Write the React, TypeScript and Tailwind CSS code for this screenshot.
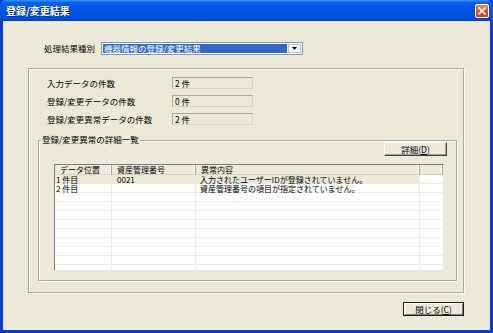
const rows = [
  { pos: '1 件目', no: '0021', msg: '入力されたユーザーIDが登録されていません。', sel: true },
  { pos: '2 件目', no: '', msg: '資産管理番号の項目が指定されていません。', sel: false },
  ...Array.from({ length: 9 }, () => ({ pos: '', no: '', msg: '', sel: false })),
];

const counts = [
  { label: '入力データの件数', value: '2 件' },
  { label: '登録/変更データの件数', value: '0 件' },
  { label: '登録/変更異常データの件数', value: '2 件' },
];

function TitleBar() {
  return (
    <div className="h-[21px] flex items-center rounded-t-[6px] bg-[linear-gradient(180deg,#3d95ff_0%,#0a5ff0_12%,#0054e3_50%,#0050e0_85%,#0041c4_100%)] pl-[6px] pr-[4px]">
      <span className="flex-1 text-white font-bold text-[10px] leading-none [text-shadow:1px_1px_0_#0a2a80]">
        登録/変更結果
      </span>
      <div className="w-[14px] h-[14px] rounded-[2px] border border-white bg-[linear-gradient(180deg,#e8865d_0%,#d9512a_60%,#c8401e_100%)] flex items-center justify-center">
        <svg width="8" height="8" viewBox="0 0 8 8">
          <path d="M1 1 L7 7 M7 1 L1 7" stroke="white" strokeWidth="1.6" strokeLinecap="square" />
        </svg>
      </div>
    </div>
  );
}

function Btn({ children, isDefault }: { children: React.ReactNode; isDefault?: boolean }) {
  return (
    <div
      className={`h-[14px] flex items-center justify-center bg-[#ece9d8] border ${
        isDefault
          ? 'border-[#1a1a1a] shadow-[inset_1px_1px_0_#fff,inset_-1px_-1px_0_#808080]'
          : 'border-t-white border-l-white border-r-[#404040] border-b-[#404040] shadow-[inset_-1px_-1px_0_#a0a0a0]'
      } text-[8.5px] leading-none`}
    >
      {children}
    </div>
  );
}

export default function App() {
  return (
    <div className="w-[493px] h-[333px] flex flex-col bg-[#0838d8] font-['Noto_Sans_CJK_JP',sans-serif] text-black">
      <TitleBar />
      <div className="flex-1 mx-[3px] mb-[3px] bg-[#ece9d8] flex flex-col pt-[21px] pl-[25px]">
        {/* 処理結果種別 */}
        <div className="flex items-center h-[13px]">
          <span className="ml-[16px] w-[57px] text-[8.5px] leading-none">処理結果種別</span>
          <div className="w-[202px] h-[13px] border border-[#7f9db9] bg-white flex items-stretch p-[1px]">
            <div className="flex-1 bg-[#316ac5] text-white text-[8.5px] leading-[9px] pl-[1px]">機器情報の登録/変更結果</div>
            <div className="w-[13px] ml-[1px] bg-[#f4f3ee] border border-[#c3c3c3] flex items-center justify-center">
              <svg width="5" height="3" viewBox="0 0 5 3">
                <path d="M0 0 H5 L2.5 3 Z" fill="#000" />
              </svg>
            </div>
          </div>
        </div>

        {/* 件数 frame */}
        <div className="mt-[13px] w-[436px] h-[225px] border border-[#aca899] shadow-[inset_1px_1px_0_#fff,1px_1px_0_#fff] pt-[8px] flex flex-col">
          <div className="flex flex-col gap-[6px]">
            {counts.map((c) => (
              <div key={c.label} className="flex items-center h-[12px]">
                <span className="ml-[18px] w-[125px] text-[8.5px] leading-none">{c.label}</span>
                <div className="w-[81px] h-[12px] border border-[#aca899] border-r-[#d8d5c6] border-b-[#d8d5c6] text-[8.5px] leading-[10px] pl-[2px]">
                  {c.value}
                </div>
              </div>
            ))}
          </div>

          {/* 詳細一覧 group */}
          <div className="relative mt-[15px] ml-[9px] w-[419px] h-[141px] border border-[#aca899] shadow-[inset_1px_1px_0_#fff,1px_1px_0_#fff] flex flex-col">
            <span className="absolute left-[2px] top-[-6px] bg-[#ece9d8] px-[1px] text-[8.5px] leading-none">
              登録/変更異常の詳細一覧
            </span>
            <div className="flex justify-end pr-[9px] pt-[1px]">
              <div className="w-[63px]">
                <Btn>
                  詳細(<span className="underline">D</span>)
                </Btn>
              </div>
            </div>
            <div className="mt-[8px] ml-[15px] w-[390px] h-[107px] border border-[#7a7a7a] border-r-[#e8e8e8] border-b-[#e8e8e8] bg-white overflow-hidden text-[8px] leading-[9px]">
              <div className="grid grid-cols-[57px_84px_224px_1fr] h-[10px] bg-[#ebeadb] border-b border-[#d6d2c2]">
                {['データ位置', '資産管理番号', '異常内容', ''].map((h, i) => (
                  <div key={i} className="border-r border-[#aca899] pl-[5px] leading-[10px] shadow-[inset_-1px_0_0_#fff]">
                    {h}
                  </div>
                ))}
              </div>
              {rows.map((r, i) => (
                <div key={i} className="grid grid-cols-[57px_84px_224px_1fr] h-[9px] border-b border-[#efedE3]">
                  <div className={`pl-[1px] border-r border-[#efede3] ${r.sel ? 'bg-[#ece9d8]' : ''}`}>{r.pos}</div>
                  <div className={`pl-[5px] border-r border-[#efede3] ${r.sel ? 'bg-[#ece9d8]' : ''}`}>{r.no}</div>
                  <div className={`pl-[4px] border-r border-[#efede3] whitespace-nowrap ${r.sel ? 'bg-[#ece9d8]' : ''}`}>{r.msg}</div>
                  <div />
                </div>
              ))}
            </div>
          </div>
        </div>

        <div className="mt-[9px] ml-[375px] w-[61px]">
          <Btn isDefault>
            閉じる(<span className="underline">C</span>)
          </Btn>
        </div>
      </div>
    </div>
  );
}
